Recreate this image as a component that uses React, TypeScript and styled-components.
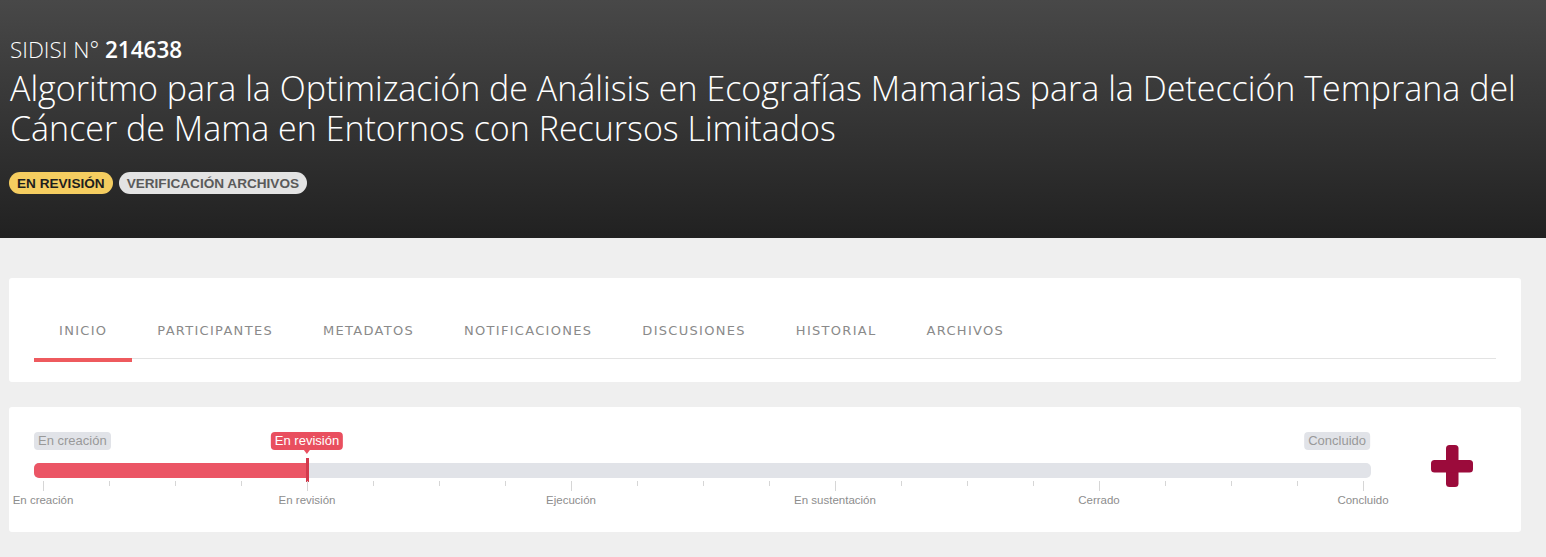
import React from "react";
import styled, { createGlobalStyle } from "styled-components";

const Global = createGlobalStyle`
  html, body { margin: 0; padding: 0; background: #efefef; }
  body { font-family: "Liberation Sans", Arial, sans-serif; }
  * { box-sizing: border-box; }
`;

const Page = styled.div`
  width: 1546px;
  min-height: 557px;
  background: #efefef;
  display: flex;
  flex-direction: column;
`;

const Header = styled.header`
  height: 238px;
  background: linear-gradient(180deg, #484848 0%, #333 55%, #212121 100%);
  padding: 36px 10px 0 10px;
  color: #fff;
  font-family: "Open Sans", "Noto Sans", sans-serif;
`;

const Code = styled.div`
  font-size: 22.5px;
  font-weight: 300;
  line-height: 28px;
  b { font-weight: 600; }
`;

const Title = styled.h1`
  margin: 4px 0 0 0;
  font-size: 34px;
  font-weight: 300;
  line-height: 40px;
  letter-spacing: 0;
  max-width: 1530px;
`;

const Badges = styled.div`
  display: flex;
  gap: 6px;
  margin-top: 24px;
  margin-left: -1px;
`;

const Badge = styled.span<{ $tone: "yellow" | "gray" }>`
  display: inline-flex;
  align-items: center;
  height: 22px;
  padding: 0 8px;
  border-radius: 11px;
  font-family: "Liberation Sans", Arial, sans-serif;
  font-weight: 700;
  font-size: 13.6px;
  background: ${(p) => (p.$tone === "yellow" ? "#f5cd60" : "#e3e3e3")};
  color: ${(p) => (p.$tone === "yellow" ? "#1e1e1e" : "#5a5a5a")};
`;

const Main = styled.main`
  display: flex;
  flex-direction: column;
  gap: 25px;
  padding: 40px 25px 25px 9px;
`;

const Card = styled.section`
  background: #fff;
  border-radius: 3px;
`;

const TabsCard = styled(Card)`
  padding: 25px 25px 20px 25px;
  height: 104px;
`;

const TabList = styled.nav`
  display: flex;
  border-bottom: 1px solid #e3e3e3;
`;

const Tab = styled.div<{ $active?: boolean }>`
  position: relative;
  height: 55px;
  padding: 0 25px;
  display: flex;
  align-items: center;
  font-family: "DejaVu Sans", sans-serif;
  font-size: 13px;
  letter-spacing: 1.3px;
  color: #8a8a8a;
  &::after {
    content: "";
    display: ${(p) => (p.$active ? "block" : "none")};
    position: absolute;
    left: 0;
    right: 0;
    bottom: -4px;
    height: 4px;
    background: #ee5a5e;
  }
`;

const ProgressCard = styled(Card)`
  height: 125px;
  padding: 25px 25px 0 25px;
  display: flex;
`;

const SliderArea = styled.div`
  width: 1337px;
  position: relative;
`;

const PillRow = styled.div`
  position: relative;
  height: 18px;
`;

const Pill = styled.span<{ $active?: boolean; $align: "left" | "center" | "right" }>`
  position: absolute;
  top: 0;
  height: 18px;
  padding: 0 4px;
  border-radius: 4px;
  font-size: 13px;
  line-height: 18px;
  white-space: nowrap;
  background: ${(p) => (p.$active ? "#e94f5f" : "#e1e3e8")};
  color: ${(p) => (p.$active ? "#fff" : "#999")};
  transform: ${(p) =>
    p.$align === "center" ? "translateX(-50%)" : p.$align === "right" ? "translateX(-100%)" : "none"};
  &::after {
    content: "";
    display: ${(p) => (p.$active ? "block" : "none")};
    position: absolute;
    left: 50%;
    bottom: -4px;
    margin-left: -3px;
    border-left: 3px solid transparent;
    border-right: 3px solid transparent;
    border-top: 4px solid #e94f5f;
  }
`;

const Track = styled.div`
  position: relative;
  margin-top: 13px;
  height: 15px;
  border-radius: 5px;
  background: #e1e3e8;
`;

const Fill = styled.div`
  position: absolute;
  left: 0;
  top: 0;
  bottom: 0;
  border-radius: 5px 0 0 5px;
  background: #eb5565;
`;

const Handle = styled.div`
  position: absolute;
  top: -5px;
  width: 3px;
  height: 24px;
  margin-left: -1px;
  background: #d23a4d;
`;

const Scale = styled.div`
  position: relative;
  margin: 3px 8px 0 9px;
  height: 30px;
`;

const Tick = styled.span<{ $major?: boolean }>`
  position: absolute;
  top: 0;
  width: 1px;
  height: ${(p) => (p.$major ? 10 : 5)}px;
  background: #d6d6d6;
`;

const TickLabel = styled.span`
  position: absolute;
  top: 13px;
  transform: translateX(-50%);
  font-size: 11.5px;
  color: #8d8d8d;
  white-space: nowrap;
`;

const IconCell = styled.div`
  flex: 1;
  display: flex;
  justify-content: center;
  padding-top: 13px;
  padding-left: 37px;
`;

const tabs = ["INICIO", "PARTICIPANTES", "METADATOS", "NOTIFICACIONES", "DISCUSIONES", "HISTORIAL", "ARCHIVOS"];
const stages = ["En creación", "En revisión", "Ejecución", "En sustentación", "Cerrado", "Concluido"];

const TRACK_W = 1337;
const SCALE_START = 9;
const SCALE_W = 1320;

export default function App() {
  const current = 1;
  const handleX = SCALE_START + (SCALE_W * current) / 5;
  return (
    <Page>
      <Global />
      <Header>
        <Code>
          SIDISI N° <b>214638</b>
        </Code>
        <Title>
          Algoritmo para la Optimización de Análisis en Ecografías Mamarias para la Detección Temprana del Cáncer de
          Mama en Entornos con Recursos Limitados
        </Title>
        <Badges>
          <Badge $tone="yellow">EN REVISIÓN</Badge>
          <Badge $tone="gray">VERIFICACIÓN ARCHIVOS</Badge>
        </Badges>
      </Header>
      <Main>
        <TabsCard>
          <TabList>
            {tabs.map((t, i) => (
              <Tab key={t} $active={i === 0}>
                {t}
              </Tab>
            ))}
          </TabList>
        </TabsCard>
        <ProgressCard>
          <SliderArea>
            <PillRow>
              <Pill $align="left" style={{ left: 0 }}>
                En creación
              </Pill>
              <Pill $active $align="center" style={{ left: handleX }}>
                En revisión
              </Pill>
              <Pill $align="right" style={{ left: TRACK_W - 1 }}>
                Concluido
              </Pill>
            </PillRow>
            <Track>
              <Fill style={{ width: handleX }} />
              <Handle style={{ left: handleX }} />
            </Track>
            <Scale>
              {Array.from({ length: 21 }).map((_, i) => (
                <Tick key={i} $major={i % 4 === 0} style={{ left: `${(i / 20) * 100}%` }} />
              ))}
              {stages.map((s, i) => (
                <TickLabel key={s} style={{ left: `${(i / 5) * 100}%` }}>
                  {s}
                </TickLabel>
              ))}
            </Scale>
          </SliderArea>
          <IconCell>
            <svg width="42" height="42" viewBox="0 0 42 42" aria-hidden="true">
              <rect x="15" y="0" width="12.5" height="42" rx="3.5" fill="#9b0b3b" />
              <rect x="0" y="15" width="42" height="12.5" rx="3.5" fill="#9b0b3b" />
            </svg>
          </IconCell>
        </ProgressCard>
      </Main>
    </Page>
  );
}
